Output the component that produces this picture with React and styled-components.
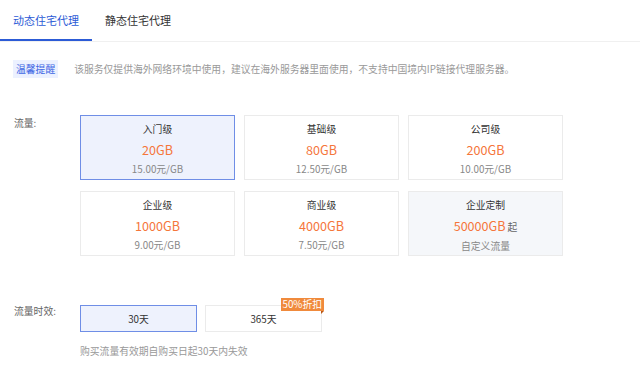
import React, { useState } from 'react';
import styled, { createGlobalStyle } from 'styled-components';

const GlobalStyle = createGlobalStyle`
  html, body { margin: 0; padding: 0; background: #fff; }
  body {
    font-family: "Noto Sans CJK SC", "Noto Sans", "Liberation Sans", sans-serif;
    color: #333;
  }
`;

const Page = styled.div`
  width: 640px; height: 366px;
  overflow: hidden;
  background: #fff;
`;

const Tabs = styled.div`
  display: flex;
  height: 41px;
  border-bottom: 1px solid #f0f0f0;
`;

const Tab = styled.div`
  padding: 0 13px;
  font-size: 11px; line-height: 41px;
  color: ${({active}) => active ? '#2c5bd6' : '#333'};
  box-shadow: ${({active}) => active ? 'inset 0 -2px 0 #2c5bd6' : 'none'};
  cursor: pointer;
`;

const Notice = styled.div`
  display: flex; align-items: center;
  margin: 18px 0 0 13px;
  height: 18px;
`;

const NoticeTag = styled.span`
  background: #ecf1ff; color: #3c66e4;
  font-size: 9.8px; line-height: 18px;
  padding: 0 3px;
`;

const NoticeText = styled.span`
  margin-left: 16px;
  font-size: 9.8px; color: #999;
`;

const Section = styled.div`
  display: flex; align-items: flex-start;
  padding-left: 14px;
  margin-top: ${({top}) => top}px;
`;

const Label = styled.div`
  width: 66px; flex: none;
  font-size: 9.8px; color: #666;
  line-height: ${({lh}) => lh || 16}px;
`;

const Grid = styled.div`
  display: grid;
  grid-template-columns: repeat(3, 155px);
  grid-auto-rows: 65px;
  column-gap: 9px; row-gap: 11px;
`;

const Card = styled.div`
  box-sizing: border-box;
  display: flex; flex-direction: column; align-items: center;
  padding-top: 5px;
  border: 1px solid ${({selected}) => selected ? '#6f8ee6' : '#ebebeb'};
  background: ${({selected, muted}) => selected ? '#eef2fd' : muted ? '#f5f7fa' : '#fff'};
  cursor: pointer;
`;

const CardTitle = styled.div`
  font-size: 9.8px; line-height: 16px; color: #333;
  margin-bottom: 3px;
`;

const CardValue = styled.div`
  font-size: 12.6px; line-height: 20px; color: #f5763b;
  & small { font-size: 9.8px; color: #666; margin-left: 2px; }
`;

const CardSub = styled.div`
  font-size: 9.8px; line-height: 14px; color: #888;
  margin-top: 2px;
`;

const Options = styled.div`
  display: flex; gap: 8px;
`;

const Option = styled.div`
  position: relative;
  box-sizing: border-box;
  width: 117px; height: 27px;
  display: flex; align-items: center; justify-content: center;
  font-size: 9.8px; color: #333;
  border: 1px solid ${({selected}) => selected ? '#6f8ee6' : '#ebebeb'};
  background: ${({selected}) => selected ? '#eef2fd' : '#fff'};
  cursor: pointer;
`;

const Badge = styled.span`
  position: absolute;
  top: -8px; right: -3px;
  background: #f08a3c; color: #fff;
  font-size: 9.8px; line-height: 13px;
  padding: 0 2px;
  &::after {
    content: '';
    position: absolute;
    right: 0; bottom: -3px;
    border-top: 3px solid #b85818;
    border-right: 3px solid transparent;
  }
`;

const Hint = styled.div`
  margin: 12px 0 0 80px;
  font-size: 9.8px; color: #999;
`;

const plans = [
  { name: '入门级', gb: '20GB', price: '15.00元/GB' },
  { name: '基础级', gb: '80GB', price: '12.50元/GB' },
  { name: '公司级', gb: '200GB', price: '10.00元/GB' },
  { name: '企业级', gb: '1000GB', price: '9.00元/GB' },
  { name: '商业级', gb: '4000GB', price: '7.50元/GB' },
  { name: '企业定制', gb: '50000GB', price: '自定义流量', custom: true },
];

export default function App() {
  const [tab, setTab] = useState(0);
  const [plan, setPlan] = useState(0);
  const [days, setDays] = useState(30);

  return (
    <Page>
      <GlobalStyle />
      <Tabs>
        {['动态住宅代理', '静态住宅代理'].map((t, i) =>
          <Tab key={t} active={tab === i} onClick={() => setTab(i)}>{t}</Tab>
        )}
      </Tabs>

      <Notice>
        <NoticeTag>温馨提醒</NoticeTag>
        <NoticeText>该服务仅提供海外网络环境中使用，建议在海外服务器里面使用，不支持中国境内IP链接代理服务器。</NoticeText>
      </Notice>

      <Section top={37}>
        <Label>流量:</Label>
        <Grid>
          {plans.map((p, i) => (
            <Card key={p.name} selected={plan === i} muted={p.custom} onClick={() => setPlan(i)}>
              <CardTitle>{p.name}</CardTitle>
              <CardValue>{p.gb}{p.custom && <small>起</small>}</CardValue>
              <CardSub>{p.price}</CardSub>
            </Card>
          ))}
        </Grid>
      </Section>

      <Section top={49}>
        <Label lh={12}>流量时效:</Label>
        <Options>
          <Option selected={days === 30} onClick={() => setDays(30)}>30天</Option>
          <Option selected={days === 365} onClick={() => setDays(365)}>
            365天
            <Badge>50%折扣</Badge>
          </Option>
        </Options>
      </Section>

      <Hint>购买流量有效期自购买日起30天内失效</Hint>
    </Page>
  );
}
